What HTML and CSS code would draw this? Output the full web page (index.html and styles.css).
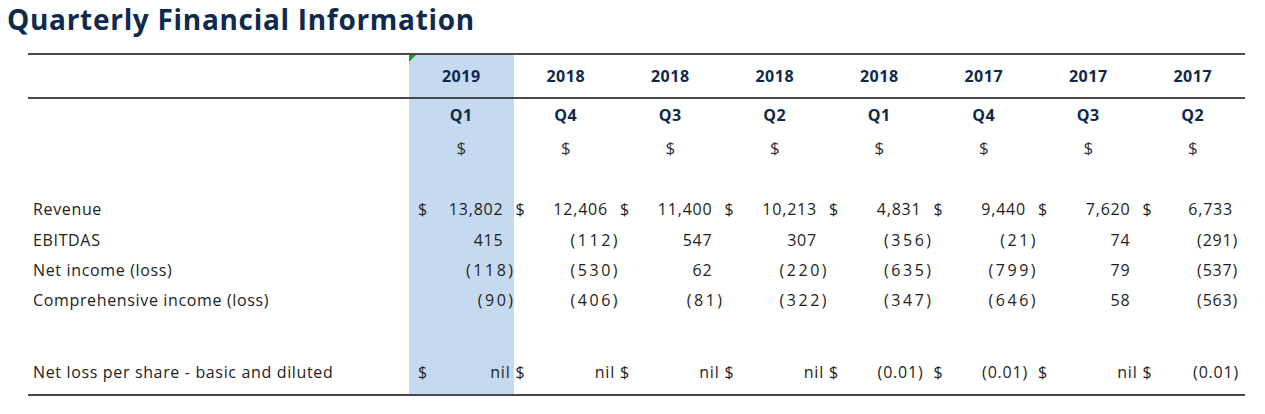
FILE: index.html
```html
<!DOCTYPE html>
<html lang="en">
<head>
<meta charset="utf-8">
<title>Quarterly Financial Information</title>
<link rel="stylesheet" href="styles.css">
</head>
<body>
<h1 class="title">Quarterly Financial Information</h1>
<div class="fin">
  <div class="row yr">
    <div class="lbl"></div>
    <div class="c hd hl flagged">2019</div>
    <div class="c hd">2018</div>
    <div class="c hd">2018</div>
    <div class="c hd">2018</div>
    <div class="c hd">2018</div>
    <div class="c hd">2017</div>
    <div class="c hd">2017</div>
    <div class="c hd">2017</div>
  </div>
  <div class="row qr">
    <div class="lbl"></div>
    <div class="c hd hl">Q1</div>
    <div class="c hd">Q4</div>
    <div class="c hd">Q3</div>
    <div class="c hd">Q2</div>
    <div class="c hd">Q1</div>
    <div class="c hd">Q4</div>
    <div class="c hd">Q3</div>
    <div class="c hd">Q2</div>
  </div>
  <div class="row dr">
    <div class="lbl"></div>
    <div class="c cs hl">$</div>
    <div class="c cs">$</div>
    <div class="c cs">$</div>
    <div class="c cs">$</div>
    <div class="c cs">$</div>
    <div class="c cs">$</div>
    <div class="c cs">$</div>
    <div class="c cs">$</div>
  </div>
  <div class="row gap1"><div class="lbl"></div><div class="c hl"></div></div>
  <div class="row d30">
    <div class="lbl">Revenue</div>
    <div class="c v hl first"><span class="cur">$</span><span class="val pos">13,802</span></div>
    <div class="c v"><span class="cur">$</span><span class="val pos">12,406</span></div>
    <div class="c v"><span class="cur">$</span><span class="val pos">11,400</span></div>
    <div class="c v"><span class="cur">$</span><span class="val pos">10,213</span></div>
    <div class="c v"><span class="cur">$</span><span class="val pos">4,831</span></div>
    <div class="c v"><span class="cur">$</span><span class="val pos">9,440</span></div>
    <div class="c v"><span class="cur">$</span><span class="val pos">7,620</span></div>
    <div class="c v"><span class="cur">$</span><span class="val pos last">6,733</span></div>
  </div>
  <div class="row d31">
    <div class="lbl">EBITDAS</div>
    <div class="c v hl first"><span class="val pos">415</span></div>
    <div class="c v"><span class="val neg wide">(112)</span></div>
    <div class="c v"><span class="val pos">547</span></div>
    <div class="c v"><span class="val pos">307</span></div>
    <div class="c v"><span class="val neg wide">(356)</span></div>
    <div class="c v"><span class="val neg wide">(21)</span></div>
    <div class="c v"><span class="val pos">74</span></div>
    <div class="c v"><span class="val neg last">(291)</span></div>
  </div>
  <div class="row d30">
    <div class="lbl">Net income (loss)</div>
    <div class="c v hl first"><span class="val neg wide">(118)</span></div>
    <div class="c v"><span class="val neg wide">(530)</span></div>
    <div class="c v"><span class="val pos">62</span></div>
    <div class="c v"><span class="val neg wide">(220)</span></div>
    <div class="c v"><span class="val neg wide">(635)</span></div>
    <div class="c v"><span class="val neg wide">(799)</span></div>
    <div class="c v"><span class="val pos">79</span></div>
    <div class="c v"><span class="val neg last">(537)</span></div>
  </div>
  <div class="row d30">
    <div class="lbl">Comprehensive income (loss)</div>
    <div class="c v hl first"><span class="val neg wide">(90)</span></div>
    <div class="c v"><span class="val neg wide">(406)</span></div>
    <div class="c v"><span class="val neg wide">(81)</span></div>
    <div class="c v"><span class="val neg wide">(322)</span></div>
    <div class="c v"><span class="val neg wide">(347)</span></div>
    <div class="c v"><span class="val neg wide">(646)</span></div>
    <div class="c v"><span class="val pos">58</span></div>
    <div class="c v"><span class="val neg last">(563)</span></div>
  </div>
  <div class="row gap2"><div class="lbl"></div><div class="c hl"></div></div>
  <div class="row d30 eps">
    <div class="lbl">Net loss per share - basic and diluted</div>
    <div class="c v hl first"><span class="cur">$</span><span class="val nil">nil</span></div>
    <div class="c v"><span class="cur">$</span><span class="val nil">nil</span></div>
    <div class="c v"><span class="cur">$</span><span class="val nil">nil</span></div>
    <div class="c v"><span class="cur">$</span><span class="val nil">nil</span></div>
    <div class="c v"><span class="cur">$</span><span class="val cents">(0.01)</span></div>
    <div class="c v"><span class="cur">$</span><span class="val cents">(0.01)</span></div>
    <div class="c v"><span class="cur">$</span><span class="val nil">nil</span></div>
    <div class="c v"><span class="cur">$</span><span class="val cents last">(0.01)</span></div>
  </div>
  <div class="row tail"><div class="lbl"></div><div class="c hl"></div></div>
</div>
</body>
</html>
```
FILE: styles.css
```css
html, body {
  margin: 0;
  padding: 0;
  background: #ffffff;
}

body {
  font-family: "Open Sans", "Liberation Sans", sans-serif;
  color: #222222;
}

.title {
  margin: 0;
  padding-left: 7px;
  font-family: "Open Sans", "Liberation Sans", sans-serif;
  font-weight: 700;
  font-size: 28px;
  line-height: 38px;
  letter-spacing: 0.7px;
  color: #0e2a4c;
}

.fin {
  margin: 15px 0 0 28px;
  width: 1217px;
  border-top: 2px solid #4a4a4a;
  border-bottom: 2px solid #4a4a4a;
  display: flex;
  flex-direction: column;
}

.row {
  display: grid;
  grid-template-columns: 381px repeat(8, 104.5px);
}

.yr { height: 42px; border-bottom: 2px solid #4a4a4a; }
.qr { height: 32px; }
.dr { height: 32px; }
.gap1 { height: 31px; }
.d30 { height: 30px; }
.d31 { height: 31px; }
.gap2 { height: 42px; }
.tail { height: 7px; }

.lbl {
  padding-left: 5px;
  display: flex;
  align-items: center;
  font-size: 16px;
  letter-spacing: 0.65px;
  color: #222222;
}

.c {
  display: flex;
  align-items: center;
}

.hl {
  background: #c5d9f1;
}

.flagged {
  position: relative;
}

.flagged::before {
  content: "";
  position: absolute;
  left: 0;
  top: 0;
  border-top: 7px solid #1f9a2a;
  border-right: 7px solid transparent;
}

.hd {
  justify-content: center;
  font-weight: 700;
  font-size: 16px;
  letter-spacing: 0.5px;
  color: #10284a;
}

.cs {
  justify-content: center;
  font-size: 17px;
  color: #333333;
}

.v {
  padding-left: 2px;
  font-size: 16px;
  letter-spacing: 0.8px;
  color: #1e1e1e;
}

.v.first {
  padding-left: 9px;
}

.val {
  margin-left: auto;
}

.pos { padding-right: 10px; }
.neg { padding-right: 0; }
.neg.wide { letter-spacing: 2.5px; margin-right: -2px; }
.neg.last { padding-right: 7px; }
.pos.last { padding-right: 12px; }
.nil { padding-right: 3px; }
.cents { padding-right: 8px; }
.cents.last { padding-right: 6px; }
```
